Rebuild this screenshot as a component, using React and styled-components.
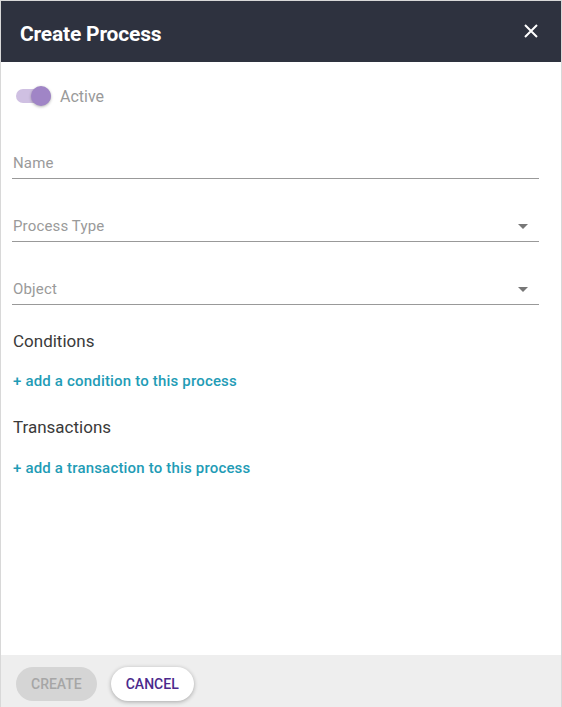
import React, { useState } from "react";
import styled, { createGlobalStyle } from "styled-components";

const GlobalStyle = createGlobalStyle`
  html, body {
    margin: 0;
    padding: 0;
    background: #ffffff;
  }
  * {
    box-sizing: border-box;
  }
`;

const Dialog = styled.div`
  width: 562px;
  height: 707px;
  display: flex;
  flex-direction: column;
  border: 1px solid #d8d8d8;
  border-bottom: none;
  font-family: Roboto, "Liberation Sans", sans-serif;
  background: #fff;
`;

const Header = styled.div`
  height: 61px;
  flex-shrink: 0;
  background: #2e323f;
  display: flex;
  align-items: center;
  justify-content: space-between;
  padding: 0 22px 0 19px;
  h1 {
    margin: 5px 0 0;
    color: #fff;
    font-size: 21px;
    font-weight: 700;
    letter-spacing: -0.2px;
  }
`;

const CloseButton = styled.button`
  border: none;
  background: none;
  padding: 0;
  width: 16px;
  height: 16px;
  margin-bottom: 2px;
  cursor: pointer;
  display: flex;
  svg {
    width: 16px;
    height: 16px;
  }
`;

const Body = styled.div`
  flex: 1;
  padding: 0 22px 0 11px;
  display: flex;
  flex-direction: column;
`;

const ToggleRow = styled.label`
  margin-top: 24px;
  height: 20px;
  display: flex;
  align-items: center;
  gap: 9px;
  padding-left: 4px;
  font-size: 16px;
  color: #9a9a9a;
  cursor: pointer;
`;

const Track = styled.span`
  position: relative;
  width: 35px;
  height: 14px;
  border-radius: 7px;
  background: ${(p) => (p.$on ? "#cfc0e2" : "#c8c8c8")};
  display: inline-block;
  &::after {
    content: "";
    position: absolute;
    top: -3px;
    left: ${(p) => (p.$on ? "15px" : "0px")};
    width: 20px;
    height: 20px;
    border-radius: 50%;
    background: ${(p) => (p.$on ? "#a085c6" : "#f5f5f5")};
    box-shadow: 0 1px 3px rgba(0, 0, 0, 0.3);
  }
`;

const Field = styled.div`
  margin-top: ${(p) => p.$top || 38}px;
  height: 25px;
  padding-bottom: 6px;
  border-bottom: 1px solid #999;
  display: flex;
  align-items: center;
  justify-content: space-between;
  font-size: 15px;
  letter-spacing: 0.15px;
  color: #9a9a9a;
  line-height: 18px;
  padding-left: 1px;
`;

const Caret = styled.span`
  width: 0;
  height: 0;
  margin-right: 11px;
  border-left: 5px solid transparent;
  border-right: 5px solid transparent;
  border-top: 5px solid #777;
`;

const SectionTitle = styled.div`
  margin-top: ${(p) => p.$top}px;
  font-size: 17px;
  line-height: 20px;
  color: #3a3a3a;
  padding-left: 1px;
`;

const AddLink = styled.a`
  margin-top: ${(p) => p.$top}px;
  font-size: 15px;
  line-height: 18px;
  font-weight: 500;
  letter-spacing: 0.18px;
  color: #1f9cb6;
  text-decoration: none;
  cursor: pointer;
  align-self: flex-start;
  padding-left: 1px;
`;

const Footer = styled.div`
  height: 52px;
  flex-shrink: 0;
  background: #eeeeee;
  display: flex;
  align-items: flex-start;
  gap: 14px;
  padding: 12px 15px 0;
`;

const Button = styled.button`
  height: 34px;
  padding: 0 15px;
  border-radius: 17px;
  border: none;
  font-family: Roboto, "Liberation Sans", sans-serif;
  font-size: 14px;
  font-weight: 500;
  text-transform: uppercase;
  background: ${(p) => (p.$primary ? "#d5d5d5" : "#fff")};
  color: ${(p) => (p.$primary ? "#a6a6a6" : "#4b2a8c")};
  box-shadow: ${(p) => (p.$primary ? "none" : "0 1px 4px rgba(0,0,0,0.3)")};
  cursor: ${(p) => (p.$primary ? "default" : "pointer")};
`;

export default function App() {
  const [active, setActive] = useState(true);
  return (
    <>
      <GlobalStyle />
      <Dialog>
        <Header>
          <h1>Create Process</h1>
          <CloseButton aria-label="close">
            <svg viewBox="0 0 16 16" fill="none" stroke="#fff" strokeWidth="2">
              <path d="M2 2 L14 14 M14 2 L2 14" />
            </svg>
          </CloseButton>
        </Header>
        <Body>
          <ToggleRow onClick={() => setActive(!active)}>
            <Track $on={active} />
            Active
          </ToggleRow>
          <Field $top={48}>Name</Field>
          <Field>
            Process Type
            <Caret />
          </Field>
          <Field>
            Object
            <Caret />
          </Field>
          <SectionTitle $top={26}>Conditions</SectionTitle>
          <AddLink $top={21}>+ add a condition to this process</AddLink>
          <SectionTitle $top={27}>Transactions</SectionTitle>
          <AddLink $top={22}>+ add a transaction to this process</AddLink>
        </Body>
        <Footer>
          <Button $primary disabled>
            Create
          </Button>
          <Button>Cancel</Button>
        </Footer>
      </Dialog>
    </>
  );
}
